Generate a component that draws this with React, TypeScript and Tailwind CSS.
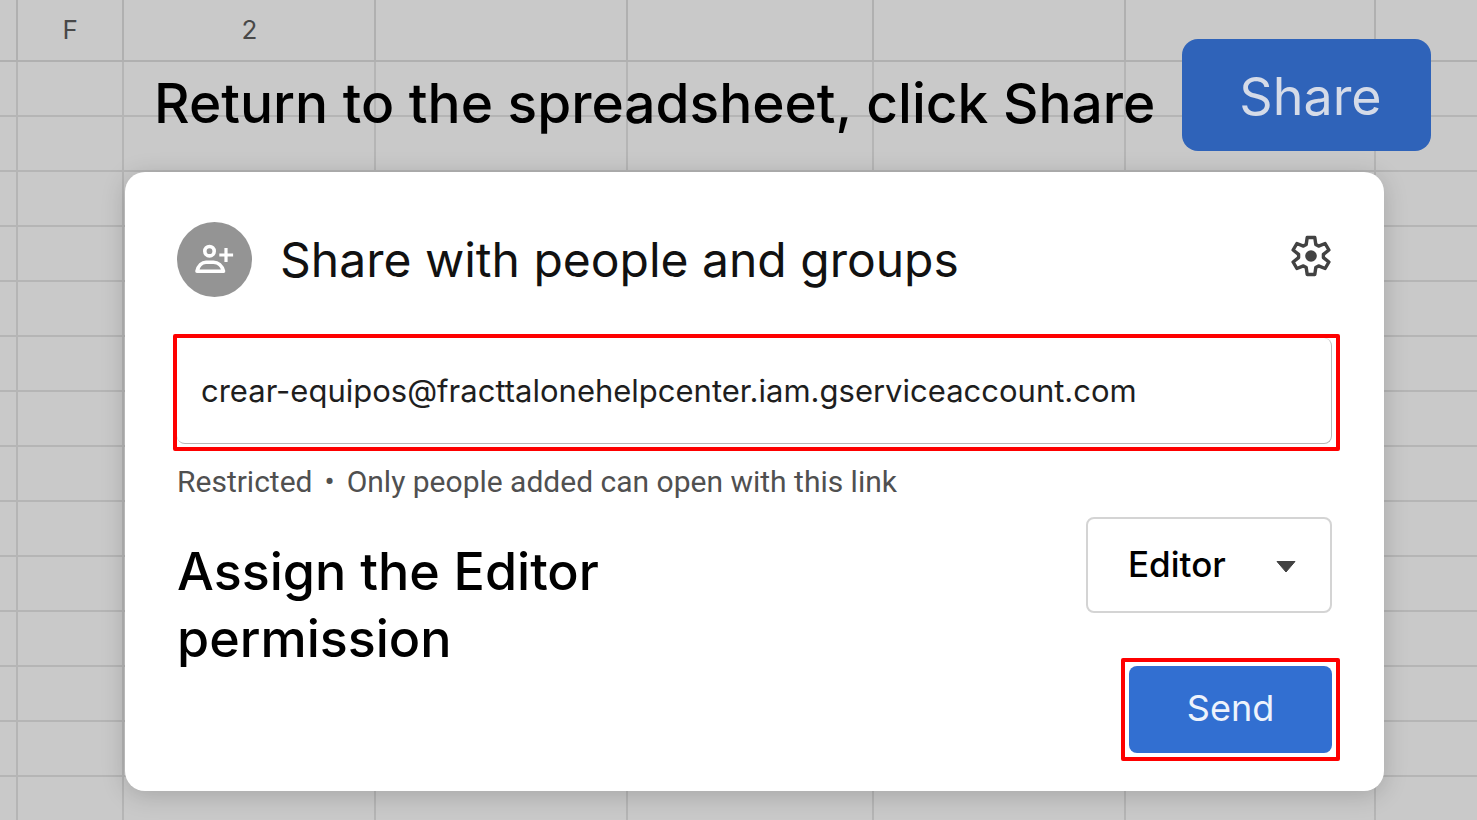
import { useState } from "react";

const rows = Array.from({ length: 14 }, (_, i) => i);
const columns = ["", "F", "2", "", "", "", "", ""];

function Spreadsheet() {
  return (
    <div className="absolute inset-0 overflow-hidden" aria-hidden="true">
      <table className="w-full table-fixed border-collapse">
        <colgroup>
          <col className="w-[1.15%]" />
          <col className="w-[7.2%]" />
          <col className="w-[17.07%]" />
          <col className="w-[17%]" />
          <col className="w-[16.72%]" />
          <col className="w-[17%]" />
          <col className="w-[16.93%]" />
          <col />
        </colgroup>
        <thead>
          <tr className="h-[61px]">
            {columns.map((label, i) => (
              <th
                key={i}
                className="border-r-2 border-b-2 border-[#b0b0b0] p-0 text-[26px] leading-8 font-normal text-[#484848] last:border-r-0"
              >
                {label}
              </th>
            ))}
          </tr>
        </thead>
        <tbody>
          {rows.map((row) => (
            <tr key={row} className="h-[55px]">
              {columns.map((_, i) => (
                <td key={i} className="border-r-2 border-b-2 border-[#b5b5b5] p-0 last:border-r-0" />
              ))}
            </tr>
          ))}
        </tbody>
      </table>
    </div>
  );
}

function PersonAddIcon() {
  return (
    <svg viewBox="0 0 40 32" className="h-8 w-10" fill="none" stroke="#fff" strokeWidth="3.6" aria-hidden="true">
      <circle cx="14.500" cy="7.200" r="4.700" />
      <path d="M2 27.200c1.400-5.600 5-9 9-9h7.500c4.500 0 8.500 3.400 10 9z" strokeLinejoin="round" />
      <path d="M31 4v14M24.300 11h13.800" strokeWidth="3.200" />
    </svg>
  );
}

function GearIcon() {
  return (
    <svg viewBox="0 0 42 42" className="size-[42px]" aria-hidden="true">
      <path
        d="M16.200 9.500 17.200 2.500H24.800L25.800 9.500 28.600 11.100 35.100 8.500 38.900 15 33.400 19.400V22.600L38.900 27 35.100 33.500 28.600 30.900 25.800 32.500 24.800 39.500H17.200L16.200 32.500 13.400 30.900 6.900 33.500 3.100 27 8.600 22.600V19.400L3.100 15 6.900 8.500 13.400 11.100Z"
        fill="none"
        stroke="#424242"
        strokeWidth="3.400"
        strokeLinejoin="round"
      />
      <circle cx="21" cy="21" r="5.800" fill="#424242" />
    </svg>
  );
}

export default function App() {
  const [email, setEmail] = useState("crear-equipos@fracttalonehelpcenter.iam.gserviceaccount.com");
  const [role, setRole] = useState("Editor");

  return (
    <main className="relative min-h-screen overflow-hidden bg-[#c9c9c9] font-['Inter',sans-serif] text-black">
      <Spreadsheet />
      <div className="relative pt-[39px] pr-[46px] pb-7 pl-[125px]">
        <header className="flex items-center justify-between pl-[29px]">
          <h1 className="pt-4 text-[55px] leading-[68px] font-medium whitespace-nowrap">
            Return to the spreadsheet, click Share
          </h1>
          <button
            type="button"
            className="h-28 w-[249px] shrink-0 rounded-2xl bg-[#2f63b9] pt-1 pl-2 text-[52px] leading-[68px] text-[#d5dbe8]"
          >
            Share
          </button>
        </header>

        <section
          aria-labelledby="share-title"
          className="mt-[21px] mr-[47px] rounded-[20px] bg-white px-12 pt-[50px] pb-[30px] shadow-[0_4px_24px_rgba(0,0,0,0.18)]"
        >
          <div className="flex items-center px-1">
            <span className="flex size-[75px] items-center justify-center rounded-full bg-[#949494]">
              <PersonAddIcon />
            </span>
            <h2 id="share-title" className="ml-7 flex-1 text-[48px] leading-[60px] text-[#111]">
              Share with people and groups
            </h2>
            <button type="button" aria-label="Settings" className="-mt-2">
              <GearIcon />
            </button>
          </div>

          <div className="mt-[37px] -mr-1 rounded-[2px] border-4 border-[#fe0000] pr-1 pb-[3px]">
            <input
              type="text"
              aria-label="Add people and groups"
              value={email}
              onChange={(e) => setEmail(e.target.value)}
              className="block h-[106px] w-full rounded-lg border border-t-0 border-l-0 border-[#b8b8b8] bg-white px-6 text-[31px] text-[#1e1e1e] outline-none"
            />
          </div>

          <p className="mt-[11px] flex gap-3 px-1 font-['Roboto',sans-serif] text-[30px] leading-10 text-[#505050]">
            <span>Restricted</span>
            <span>•</span>
            <span>Only people added can open with this link</span>
          </p>

          <div className="mt-[15px] flex items-start justify-between pl-1">
            <p className="w-[480px] pt-[21px] text-[52px] leading-[67px] font-medium">
              Assign the Editor permission
            </p>
            <div className="-mr-1 flex flex-col items-end">
              <div className="relative mr-2">
                <select
                  aria-label="Permission"
                  value={role}
                  onChange={(e) => setRole(e.target.value)}
                  className="block h-24 w-[246px] appearance-none rounded-lg border-2 border-[#d4d4d4] bg-white pb-[2px] pl-10 text-[35px] font-medium outline-none"
                >
                  <option>Editor</option>
                  <option>Viewer</option>
                </select>
                <svg
                  viewBox="0 0 20 12"
                  className="pointer-events-none absolute top-11 right-9 h-3 w-5"
                  aria-hidden="true"
                >
                  <path d="M1 .5h18L10 11z" fill="#424242" stroke="#424242" strokeLinejoin="round" />
                </svg>
              </div>
              <div className="mt-[45px] rounded-[2px] border-4 border-[#fe0000] p-1">
                <button
                  type="button"
                  className="block h-[87px] w-[203px] rounded-lg bg-[#326fd1] pb-1 text-[36px] text-[#eef3fc]"
                >
                  Send
                </button>
              </div>
            </div>
          </div>
        </section>
      </div>
    </main>
  );
}
